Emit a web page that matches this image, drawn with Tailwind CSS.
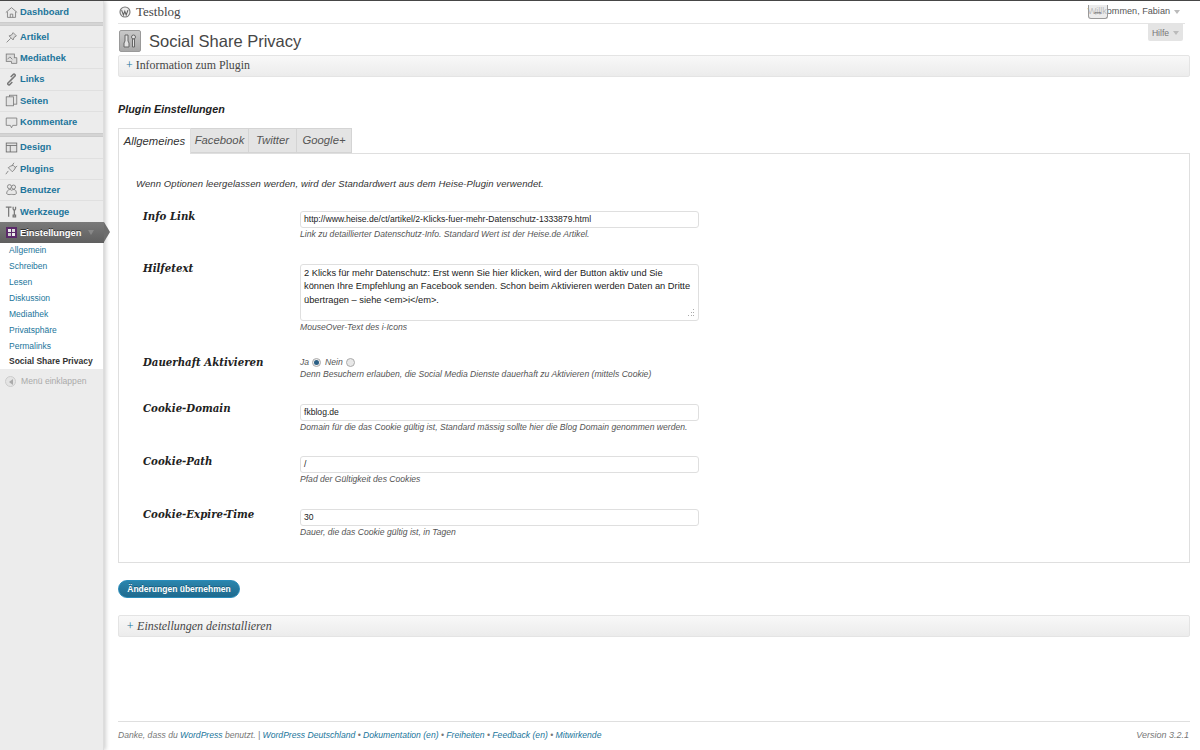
<!DOCTYPE html>
<html lang="de">
  <head>
    <meta charset="UTF-8" />
    <title>Social Share Privacy</title>
    <script src="https://cdn.jsdelivr.net/npm/@tailwindcss/browser@4"></script>
  </head>
  <body class="bg-white font-['Liberation_Sans',sans-serif] text-[#333] overflow-hidden">
    <div class="flex h-[750px] w-[1200px] overflow-hidden border-t border-[#464646]">
      <!-- Seitenleiste -->
      <aside class="w-[104px] shrink-0 bg-[#ececec] border-r border-[#ddd] shadow-[2px_0_4px_rgba(0,0,0,0.18)] text-[9.400px] font-bold text-[#21759b]">
        <nav class="flex flex-col">
          <a class="flex h-[21px] items-center gap-[2px] pl-[5px] pt-px">
            <svg class="w-[13px] h-[13px]" viewBox="0 0 16 16" fill="#e8e8e8" stroke="#777"><path d="M1 8l7-6 7 6M3 7v7h10V7M6.500 14v-4h3v4"/></svg>
            <span>Dashboard</span>
          </a>
          <div class="h-[4px] mb-[1px] bg-[#d4d4d4] border-y border-[#ccc]"></div>
          <a class="flex h-[21.200px] items-center gap-[2px] pl-[5px] border-b border-[#e0e0e0]">
            <svg class="w-[13px] h-[13px]" viewBox="0 0 16 16" fill="#ddd" stroke="#777"><path d="M2 14l5-5M5 6l5 5 1-3 3-2-4-4-2 3z"/></svg>
            <span>Artikel</span>
          </a>
          <a class="flex h-[21.200px] items-center gap-[2px] pl-[5px] border-b border-[#e0e0e0]">
            <svg class="w-[13px] h-[13px]" viewBox="0 0 16 16" fill="#ddd" stroke="#777"><rect x="1.500" y="2.500" width="10" height="9"/><path d="M3 9l3-3 3 3M11 7h3.500v7H8v-2"/></svg>
            <span>Mediathek</span>
          </a>
          <a class="flex h-[21.200px] items-center gap-[2px] pl-[5px] border-b border-[#e0e0e0]">
            <svg class="w-[13px] h-[13px]" viewBox="0 0 16 16" fill="none" stroke="#777" stroke-width="1.800"><path d="M7 9l-3.500 3.500a1.500 1.500 0 0 0 2 2L9 11M9 7l3.500-3.500a1.500 1.500 0 0 0-2-2L7 5M6 10l4-4"/></svg>
            <span>Links</span>
          </a>
          <a class="flex h-[21.200px] items-center gap-[2px] pl-[5px] border-b border-[#e0e0e0]">
            <svg class="w-[13px] h-[13px]" viewBox="0 0 16 16" fill="#e4e4e4" stroke="#777"><rect x="5.500" y="1.500" width="9" height="11"/><rect x="1.500" y="3.500" width="9" height="11"/></svg>
            <span>Seiten</span>
          </a>
          <a class="flex h-[21.200px] items-center gap-[2px] pl-[5px]">
            <svg class="w-[13px] h-[13px]" viewBox="0 0 16 16" fill="#e8e8e8" stroke="#777"><path d="M1.500 2.500h13v9H9.500L8 14.500 6.500 11.500h-5z"/></svg>
            <span>Kommentare</span>
          </a>
          <div class="h-[4.500px] bg-[#d4d4d4] border-y border-[#ccc]"></div>
          <a class="flex h-[21.200px] items-center gap-[2px] pl-[5px] border-b border-[#e0e0e0]">
            <svg class="w-[13px] h-[13px]" viewBox="0 0 16 16" fill="#e4e4e4" stroke="#666"><rect x="1.500" y="2.500" width="13" height="11"/><path d="M1.500 5.500h13M6.500 5.500v8" fill="none"/></svg>
            <span>Design</span>
          </a>
          <a class="flex h-[21.200px] items-center gap-[2px] pl-[5px] border-b border-[#e0e0e0]">
            <svg class="w-[13px] h-[13px]" viewBox="0 0 16 16" fill="#e4e4e4" stroke="#777"><path d="M1 15l3-4M4 7l5 5 2-2 2-3-3-3-3 1zM9 4l2-3M12 7l3-2"/></svg>
            <span>Plugins</span>
          </a>
          <a class="flex h-[21.200px] items-center gap-[2px] pl-[5px] border-b border-[#e0e0e0]">
            <svg class="w-[13px] h-[13px]" viewBox="0 0 16 16" fill="#e8e8e8" stroke="#777"><circle cx="5.500" cy="4.500" r="2.500"/><circle cx="10.500" cy="5" r="2.500"/><path d="M2 13c0-3 2-5 4-5s2 1 2 1 1-1 3-1 3 2 3 5c-2 2-4 1-6 1s-4 1-6-1z"/></svg>
            <span>Benutzer</span>
          </a>
          <a class="flex h-[21.200px] items-center gap-[2px] pl-[5px]">
            <svg class="w-[13px] h-[13px]" viewBox="0 0 16 16" fill="none" stroke="#777" stroke-width="1.500"><path d="M1 2.500h7M4.500 2.500v12M11.500 7v5M10 12.500h3v2h-3zM10 2v3l1.500 2 1.500-2V2"/></svg>
            <span>Werkzeuge</span>
          </a>
          <!-- aktiver Menüpunkt -->
          <a class="relative flex h-[21px] items-center gap-[2px] pl-[5px] bg-gradient-to-b from-[#7a7a7a] to-[#5f5f5f] text-white w-[104px] [text-shadow:0_-1px_0_#333]">
            <svg class="w-[13px] h-[13px]" viewBox="0 0 13 13"><rect x="1" y="1" width="11" height="11" fill="#5b2a6a"/><rect x="3" y="3" width="3" height="3" fill="#eee"/><rect x="7" y="3" width="3" height="3" fill="#ddd"/><rect x="3" y="7" width="3" height="3" fill="#ccc"/><rect x="7" y="7" width="3" height="3" fill="#eee"/></svg>
            <span>Einstellungen</span>
            <span class="absolute right-[10px] top-[8px] w-0 h-0 border-x-[3px] border-t-[5px] border-x-transparent border-t-[#888]"></span>
            <span class="absolute left-[104px] top-0 w-0 h-0 border-y-[10.500px] border-l-[6px] border-y-transparent border-l-[#6d6d6d]"></span>
          </a>
          <ul class="bg-white pl-[9px] h-[126px] text-[8.500px] font-normal">
            <li class="h-[15.900px] leading-[15.900px]">Allgemein</li>
            <li class="h-[15.900px] leading-[15.900px]">Schreiben</li>
            <li class="h-[15.900px] leading-[15.900px]">Lesen</li>
            <li class="h-[15.900px] leading-[15.900px]">Diskussion</li>
            <li class="h-[15.900px] leading-[15.900px]">Mediathek</li>
            <li class="h-[15.900px] leading-[15.900px]">Privatsphäre</li>
            <li class="h-[15.900px] leading-[15.900px]">Permalinks</li>
            <li class="h-[15.900px] leading-[15.900px] font-bold text-[#333]">Social Share Privacy</li>
          </ul>
          <div class="flex items-center gap-[5px] pl-[5px] mt-[6px] h-[13px] text-[8.600px] font-normal text-[#aaa]">
            <span class="flex w-[11px] h-[11px] items-center justify-center rounded-full border border-[#ccc] bg-[#e4e4e4]">
              <span class="w-0 h-0 border-y-[3px] border-r-[4px] border-y-transparent border-r-[#aaa]"></span>
            </span>
            <span>Menü einklappen</span>
          </div>
        </nav>
      </aside>

      <!-- Inhalt -->
      <main class="relative flex-1 pl-[14px] pr-[10px] min-w-0">
        <!-- Kopfzeile -->
        <header class="flex h-[23px] items-center justify-between border-b border-[#e4e4e4] pl-px mr-[5px]">
          <div class="flex items-center gap-[5px] font-['Liberation_Serif',serif] text-[13px] text-[#464646]">
            <svg class="w-[12px] h-[12px]" viewBox="0 0 13 13"><circle cx="6.500" cy="6.500" r="6" fill="#777"/><circle cx="6.500" cy="6.500" r="4.800" fill="#eee"/><path d="M2.800 4.500l2 5.200 1.500-4 1.500 4 1.900-5.200" fill="none" stroke="#666" stroke-width="1.200"/></svg>
            <span>Testblog</span>
          </div>
          <div class="flex items-center gap-[4px] pr-[5px] text-[9.100px] text-[#555]">
            <span>Willkommen, Fabian</span>
            <span class="w-0 h-0 border-x-[3px] border-t-[4px] border-x-transparent border-t-[#bbb]"></span>
          </div>
        </header>
        <!-- Griff über dem Benutzernamen -->
        <div class="absolute left-[984px] top-[4px] flex h-[14px] w-[20px] items-center justify-center rounded-b-[3px] border border-t-0 border-[#999] bg-[#e4e4e4]/70 text-[12px] leading-none text-[#666]">⇔</div>
        <div class="absolute right-[17px] top-[23px] flex h-[17px] w-[35px] items-center justify-center gap-[4px] bg-[#e4e4e4] pt-px text-[8.600px] text-[#777] rounded-b-[2px]">
          <span>Hilfe</span>
          <span class="w-0 h-0 border-x-[3px] border-t-[4px] border-x-transparent border-t-[#bbb]"></span>
        </div>

        <!-- Titel -->
        <div class="flex h-[30px] items-center gap-[8px] pt-[4px] pl-px">
          <div class="flex h-[22px] w-[22px] items-center justify-center rounded-[2px] border border-[#999] bg-gradient-to-b from-[#c8c8c8] to-[#a8a8a8]">
            <svg class="w-[16px] h-[16px]" viewBox="0 0 16 16" fill="#e2e2e2" stroke="#666"><path d="M3 2h3v6l1 2v4H2v-4l1-2z"/><circle cx="11.500" cy="4" r="2"/><path d="M10.500 6h2v8h-2z"/></svg>
          </div>
          <h1 class="text-[16.500px] leading-none text-[#464646]">Social Share Privacy</h1>
        </div>

        <div class="flex h-[22px] items-center rounded-[2px] border border-[#e4e4e4] bg-gradient-to-b from-[#f8f8f8] to-[#ececec] pl-[7px] mt-px font-['Liberation_Serif',serif] text-[11.900px] text-[#464646]">
          <span class="text-[#21759b] mr-[3px]">+</span>Information zum Plugin
        </div>

        <h3 class="mt-[24px] text-[10.800px] font-bold italic leading-[16px] text-[#222]">Plugin Einstellungen</h3>

        <!-- Tabs -->
        <div class="mt-[11px] flex h-[25px] text-[11.300px] italic text-[#555]">
          <div class="relative z-10 flex h-[26px] w-[73px] items-center justify-center border border-b-0 border-[#dfdfdf] bg-white text-[#333]">Allgemeines</div>
          <div class="flex w-[58px] items-center justify-center border-y border-r border-[#d4d4d4] bg-[#e4e4e4]">Facebook</div>
          <div class="flex w-[48px] items-center justify-center border-y border-r border-[#d4d4d4] bg-[#e4e4e4]">Twitter</div>
          <div class="flex w-[55px] items-center justify-center border-y border-r border-[#d4d4d4] bg-[#e4e4e4]">Google+</div>
        </div>

        <section class="h-[410px] border border-[#dfdfdf] pl-[17px] pt-[23px]">
          <p class="text-[9.500px] italic leading-[13px] text-[#333] tracking-[0.1px]">Wenn Optionen leergelassen werden, wird der Standardwert aus dem Heise-Plugin verwendet.</p>

          <div class="mt-[21px] grid grid-cols-[157px_399px] pl-[7px]">
            <label class="h-[53px] font-['DejaVu_Serif',serif] text-[10.200px] font-bold italic leading-[10px] text-[#222]">Info Link</label>
            <div>
              <div class="flex h-[17px] items-center rounded-[3px] border border-[#dfdfdf] pl-[3px] text-[8.600px] text-[#222]">http://www.heise.de/ct/artikel/2-Klicks-fuer-mehr-Datenschutz-1333879.html</div>
              <p class="mt-[1px] text-[8.600px] italic leading-[11px] text-[#555]">Link zu detaillierter Datenschutz-Info. Standard Wert ist der Heise.de Artikel.</p>
            </div>

            <label class="h-[91px] font-['DejaVu_Serif',serif] text-[10.200px] font-bold italic leading-[8px] text-[#222]">Hilfetext</label>
            <div>
              <div class="relative h-[57px] rounded-[3px] border border-[#dfdfdf] pl-[3px] pt-[2px] text-[9.300px] leading-[13.400px] text-[#222]">
                2 Klicks für mehr Datenschutz: Erst wenn Sie hier klicken, wird der Button aktiv und Sie<br />
                können Ihre Empfehlung an Facebook senden. Schon beim Aktivieren werden Daten an Dritte<br />
                übertragen – siehe &lt;em&gt;i&lt;/em&gt;.
                <svg class="absolute right-[3px] bottom-[3px] w-[8px] h-[8px]" viewBox="0 0 8 8" fill="#aaa"><rect x="6" y="0" width="1" height="1"/><rect x="4" y="3" width="1" height="1"/><rect x="6" y="3" width="1" height="1"/><rect x="1" y="6" width="1" height="1"/><rect x="4" y="6" width="1" height="1"/><rect x="6" y="6" width="1" height="1"/></svg>
              </div>
              <p class="mt-[1px] text-[8.600px] italic leading-[11px] text-[#555]">MouseOver-Text des i-Icons</p>
            </div>

            <label class="h-[49px] font-['DejaVu_Serif',serif] text-[10.200px] font-bold italic leading-[14px] text-[#222]">Dauerhaft Aktivieren</label>
            <div>
              <div class="flex h-[14px] items-center text-[8.600px] italic text-[#555]">
                <span>Ja</span>
                <span class="ml-[3px] flex h-[9px] w-[9px] items-center justify-center rounded-full border border-[#aaa] bg-[#eee]"><span class="h-[5px] w-[5px] rounded-full bg-[#2a5f85]"></span></span>
                <span class="ml-[4px]">Nein</span>
                <span class="ml-[3px] h-[9px] w-[9px] rounded-full border border-[#aaa] bg-[#e8e8e8]"></span>
              </div>
              <p class="text-[8.600px] italic leading-[11px] text-[#555]">Denn Besuchern erlauben, die Social Media Dienste dauerhaft zu Aktivieren (mittels Cookie)</p>
            </div>

            <label class="h-[52px] font-['DejaVu_Serif',serif] text-[10.200px] font-bold italic leading-[8px] text-[#222]">Cookie-Domain</label>
            <div>
              <div class="flex h-[17px] items-center rounded-[3px] border border-[#dfdfdf] pl-[3px] text-[8.600px] text-[#222]">fkblog.de</div>
              <p class="mt-[1px] text-[8.600px] italic leading-[11px] text-[#555]">Domain für die das Cookie gültig ist, Standard mässig sollte hier die Blog Domain genommen werden.</p>
            </div>

            <label class="h-[53px] font-['DejaVu_Serif',serif] text-[10.200px] font-bold italic leading-[10px] text-[#222]">Cookie-Path</label>
            <div>
              <div class="flex h-[17px] items-center rounded-[3px] border border-[#dfdfdf] pl-[3px] text-[8.600px] text-[#222]">/</div>
              <p class="mt-[1px] text-[8.600px] italic leading-[11px] text-[#555]">Pfad der Gültigkeit des Cookies</p>
            </div>

            <label class="h-[40px] font-['DejaVu_Serif',serif] text-[10.200px] font-bold italic leading-[10px] text-[#222]">Cookie-Expire-Time</label>
            <div>
              <div class="flex h-[17px] items-center rounded-[3px] border border-[#dfdfdf] pl-[3px] text-[8.600px] text-[#222]">30</div>
              <p class="mt-[1px] text-[8.600px] italic leading-[11px] text-[#555]">Dauer, die das Cookie gültig ist, in Tagen</p>
            </div>
          </div>
        </section>

        <button class="mt-[17px] block h-[18px] w-[122px] rounded-full border border-[#298cba] bg-gradient-to-b from-[#2a85ad] to-[#1f6a8e] text-[8.500px] font-bold text-white [text-shadow:0_-1px_0_rgba(0,0,0,0.3)]">Änderungen übernehmen</button>

        <div class="mt-[17px] flex h-[22px] items-center rounded-[2px] border border-[#e4e4e4] bg-gradient-to-b from-[#f8f8f8] to-[#ececec] pl-[7px] font-['Liberation_Serif',serif] text-[12px] italic text-[#464646]">
          <span class="text-[#21759b] mr-[3px]">+</span>Einstellungen deinstallieren
        </div>

        <!-- Fußzeile -->
        <footer class="mt-[84px] flex h-[28px] items-center justify-between border-t border-[#dfdfdf] text-[8.600px] italic text-[#777]">
          <p>Danke, dass du <a class="text-[#21759b]">WordPress</a> benutzt. | <a class="text-[#21759b]">WordPress Deutschland</a> • <a class="text-[#21759b]">Dokumentation (en)</a> • <a class="text-[#21759b]">Freiheiten</a> • <a class="text-[#21759b]">Feedback (en)</a> • <a class="text-[#21759b]">Mitwirkende</a></p>
          <p class="pr-px text-[9px]">Version 3.2.1</p>
        </footer>
      </main>
    </div>
  </body>
</html>
